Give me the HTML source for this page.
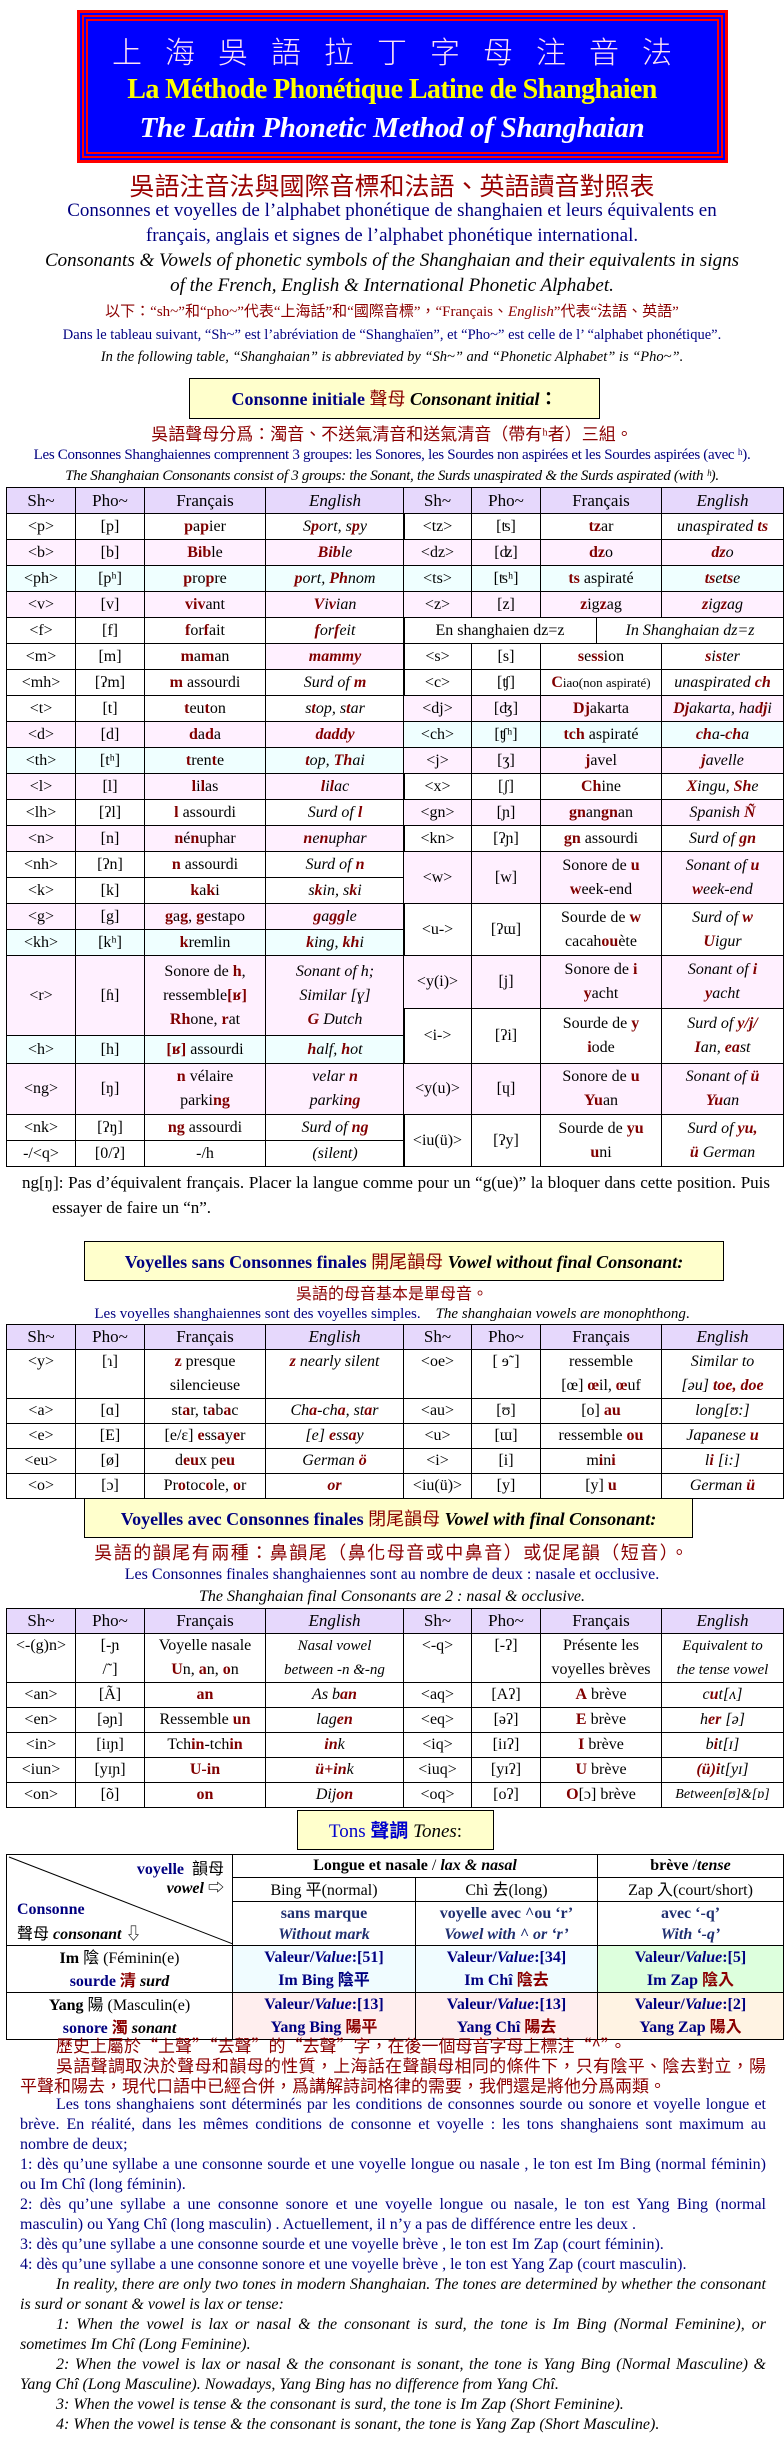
<!DOCTYPE html>
<html><head><meta charset="utf-8">
<style>
*{margin:0;padding:0;box-sizing:border-box}
body{width:784px;height:2445px;position:relative;background:#fff;font-family:"Liberation Serif","Noto Sans CJK TC",serif;color:#000;overflow:hidden}
.a{position:absolute;left:0;width:784px;text-align:center;white-space:nowrap}
.cj{font-family:"Noto Sans CJK TC","Liberation Serif",sans-serif}
.nv{color:#000080}
.dr{color:#8b0000}
.r{color:#800000;font-weight:bold}
.ri{color:#800000;font-weight:bold;font-style:italic}
.i{font-style:italic}
.box{position:absolute;background:#ffffcc;border:1px solid #000;text-align:center;font-weight:bold;white-space:nowrap}
table{position:absolute;border-collapse:collapse;table-layout:fixed;font-size:16px}
td{border:1px solid #000;text-align:center;padding:0 1px;line-height:24px;white-space:nowrap;overflow:hidden}
tr.h td{background:#e6d8fc;font-size:17px}
.p{background:#fff0ff}
.c{background:#efffff}
td.e{font-style:italic}
.para{position:absolute;left:20px;width:746px;text-align:justify;font-size:16px;line-height:20px}
.para p{text-indent:36px}
.ni{text-indent:0!important}
</style></head><body>

<div style="position:absolute;left:77px;top:10px;width:651px;height:153px;background:#0000ff;border:3px solid #ff0000;box-shadow:inset 0 0 0 2px #0000ff,inset 0 0 0 4px #ff0000,inset 0 0 0 6px #0000ff,inset 0 0 0 8px #ff0000"></div>
<div class="a cj" style="top:30px;font-size:30px;line-height:40px;color:#ffe4f4;letter-spacing:23px;text-indent:23px;font-weight:300">上海吳語拉丁字母注音法</div>
<div class="a" style="top:72px;font-size:28px;line-height:36px;color:#ffff00;font-weight:bold;letter-spacing:-0.6px">La Méthode Phonétique Latine de Shanghaien</div>
<div class="a" style="top:110px;font-size:29px;line-height:36px;color:#fff;font-weight:bold;font-style:italic;letter-spacing:-0.3px">The Latin Phonetic Method of Shanghaian</div>

<div class="a cj" style="top:170px;font-size:25px;line-height:30px;color:#990000">吳語注音法與國際音標和法語、英語讀音對照表</div>
<div class="a nv" style="top:198px;font-size:19px;line-height:25px">Consonnes et voyelles de l’alphabet phonétique de shanghaien et leurs équivalents en</div>
<div class="a nv" style="top:223px;font-size:19px;line-height:25px">français, anglais et signes de l’alphabet phonétique international.</div>
<div class="a i" style="top:248px;font-size:19px;line-height:25px">Consonants &amp; Vowels of phonetic symbols of the Shanghaian and their equivalents in signs</div>
<div class="a i" style="top:273px;font-size:19px;line-height:25px">of the French, English &amp; International Phonetic Alphabet.</div>
<div class="a dr" style="top:302px;font-size:15px;line-height:20px">以下：“sh~”和“pho~”代表“上海話”和“國際音標”，“Français、<i>English</i>”代表“法語、英語”</div>
<div class="a nv" style="top:326px;font-size:14.5px;line-height:18px">Dans le tableau suivant, “Sh~” est l’abréviation de “Shanghaïen”, et “Pho~” est celle de l’ “alphabet phonétique”.</div>
<div class="a i" style="top:348px;font-size:14.5px;line-height:18px">In the following table, “Shanghaian” is abbreviated by “Sh~” and “Phonetic Alphabet” is “Pho~”.</div>

<div class="box" style="left:189px;top:378px;width:411px;height:41px;line-height:39px;font-size:18px"><span class="nv">Consonne initiale</span> <span class="dr cj" style="font-weight:normal">聲母</span> <i>Consonant initial</i>：</div>
<div class="a dr cj" style="top:422px;font-size:17px;line-height:22px">吳語聲母分爲：濁音、不送氣清音和送氣清音（帶有ʰ者）三組。</div>
<div class="a nv" style="top:446px;font-size:15px;line-height:19px;letter-spacing:-0.3px">Les Consonnes Shanghaiennes comprennent 3 groupes: les Sonores, les Sourdes non aspirées et les Sourdes aspirées (avec ʰ).</div>
<div class="a i" style="top:467px;font-size:15px;line-height:19px;letter-spacing:-0.3px">The Shanghaian Consonants consist of 3 groups: the Sonant, the Surds unaspirated &amp; the Surds aspirated (with ʰ).</div>

<!-- Table 1 left -->
<table style="left:6px;top:487px;width:398px">
<colgroup><col style="width:69px"><col style="width:69px"><col style="width:121px"><col style="width:139px"></colgroup>
<tr class="h" style="height:26px"><td>Sh~</td><td>Pho~</td><td>Français</td><td class="e">English</td></tr>
<tr style="height:26px"><td>&lt;p&gt;</td><td>[p]</td><td><span class="r">p</span>a<span class="r">p</span>ier</td><td class="e">S<span class="ri">p</span>ort, s<span class="ri">p</span>y</td></tr>
<tr class="p" style="height:26px"><td>&lt;b&gt;</td><td>[b]</td><td><span class="r">Bib</span>le</td><td class="e"><span class="ri">Bib</span>le</td></tr>
<tr class="c" style="height:26px"><td>&lt;ph&gt;</td><td>[pʰ]</td><td><span class="r">p</span>ro<span class="r">p</span>re</td><td class="e"><span class="ri">p</span>ort, <span class="ri">Ph</span>nom</td></tr>
<tr class="p" style="height:26px"><td>&lt;v&gt;</td><td>[v]</td><td><span class="r">viv</span>ant</td><td class="e"><span class="ri">V</span>i<span class="ri">v</span>ian</td></tr>
<tr style="height:26px"><td>&lt;f&gt;</td><td>[f]</td><td><span class="r">f</span>or<span class="r">f</span>ait</td><td class="e"><span class="ri">f</span>or<span class="ri">f</span>eit</td></tr>
<tr style="height:26px"><td>&lt;m&gt;</td><td>[m]</td><td><span class="r">m</span>a<span class="r">m</span>an</td><td class="e p"><span class="ri">mammy</span></td></tr>
<tr style="height:26px"><td>&lt;mh&gt;</td><td>[ʔm]</td><td><span class="r">m</span> assourdi</td><td class="e">Surd of <span class="ri">m</span></td></tr>
<tr style="height:26px"><td>&lt;t&gt;</td><td>[t]</td><td><span class="r">t</span>eu<span class="r">t</span>on</td><td class="e">s<span class="ri">t</span>op, s<span class="ri">t</span>ar</td></tr>
<tr class="p" style="height:26px"><td>&lt;d&gt;</td><td>[d]</td><td><span class="r">d</span>a<span class="r">d</span>a</td><td class="e"><span class="ri">daddy</span></td></tr>
<tr class="c" style="height:26px"><td>&lt;th&gt;</td><td>[tʰ]</td><td><span class="r">t</span>ren<span class="r">t</span>e</td><td class="e"><span class="ri">t</span>op, <span class="ri">Th</span>ai</td></tr>
<tr class="p" style="height:26px"><td>&lt;l&gt;</td><td>[l]</td><td><span class="r">l</span>i<span class="r">l</span>as</td><td class="e"><span class="ri">l</span>i<span class="ri">l</span>ac</td></tr>
<tr style="height:26px"><td>&lt;lh&gt;</td><td>[ʔl]</td><td><span class="r">l</span> assourdi</td><td class="e">Surd of <span class="ri">l</span></td></tr>
<tr class="p" style="height:26px"><td>&lt;n&gt;</td><td>[n]</td><td><span class="r">n</span>é<span class="r">n</span>uphar</td><td class="e"><span class="ri">n</span>e<span class="ri">n</span>uphar</td></tr>
<tr style="height:26px"><td>&lt;nh&gt;</td><td>[ʔn]</td><td><span class="r">n</span> assourdi</td><td class="e">Surd of <span class="ri">n</span></td></tr>
<tr style="height:26px"><td>&lt;k&gt;</td><td>[k]</td><td><span class="r">k</span>a<span class="r">k</span>i</td><td class="e">s<span class="ri">k</span>in, s<span class="ri">k</span>i</td></tr>
<tr class="p" style="height:26px"><td>&lt;g&gt;</td><td>[g]</td><td><span class="r">g</span>a<span class="r">g</span>, <span class="r">g</span>estapo</td><td class="e"><span class="ri">g</span>a<span class="ri">gg</span>le</td></tr>
<tr class="c" style="height:26px"><td>&lt;kh&gt;</td><td>[kʰ]</td><td><span class="r">k</span>remlin</td><td class="e"><span class="ri">k</span>ing, <span class="ri">kh</span>i</td></tr>
<tr class="p" style="height:80px"><td>&lt;r&gt;</td><td>[ɦ]</td><td>Sonore de <span class="r">h</span>,<br>ressemble<span class="r">[ʁ]</span><br><span class="r">Rh</span>one, <span class="r">r</span>at</td><td class="e">Sonant of h;<br>Similar [ɣ]<br><span class="ri">G</span> Dutch</td></tr>
<tr class="c" style="height:28px"><td>&lt;h&gt;</td><td>[h]</td><td><span class="r">[ʁ]</span> assourdi</td><td class="e"><span class="ri">h</span>alf, <span class="ri">h</span>ot</td></tr>
<tr class="p" style="height:51px"><td>&lt;ng&gt;</td><td>[ŋ]</td><td><span class="r">n</span> vélaire<br>parki<span class="r">ng</span></td><td class="e">velar <span class="ri">n</span><br>parki<span class="ri">ng</span></td></tr>
<tr style="height:26px"><td>&lt;nk&gt;</td><td>[ʔŋ]</td><td><span class="r">ng</span> assourdi</td><td class="e">Surd of <span class="ri">ng</span></td></tr>
<tr style="height:26px"><td>-/&lt;q&gt;</td><td>[0/ʔ]</td><td>-/h</td><td class="e">(silent)</td></tr>
</table>

<!-- Table 1 right -->
<table style="left:403px;top:487px;width:380px">
<colgroup><col style="width:68px"><col style="width:69px"><col style="width:121px"><col style="width:122px"></colgroup>
<tr class="h" style="height:26px"><td>Sh~</td><td>Pho~</td><td>Français</td><td class="e">English</td></tr>
<tr style="height:26px"><td>&lt;tz&gt;</td><td>[ʦ]</td><td><span class="r">tz</span>ar</td><td class="e">unaspirated <span class="ri">ts</span></td></tr>
<tr class="p" style="height:26px"><td>&lt;dz&gt;</td><td>[ʣ]</td><td><span class="r">dz</span>o</td><td class="e"><span class="ri">dz</span>o</td></tr>
<tr class="c" style="height:26px"><td>&lt;ts&gt;</td><td>[ʦʰ]</td><td><span class="r">ts</span> aspiraté</td><td class="e"><span class="ri">ts</span>e<span class="ri">ts</span>e</td></tr>
<tr class="p" style="height:26px"><td>&lt;z&gt;</td><td>[z]</td><td><span class="r">z</span>ig<span class="r">z</span>ag</td><td class="e"><span class="ri">z</span>ig<span class="ri">z</span>ag</td></tr>
<tr style="height:26px"><td colspan="4" style="padding:0"><div style="display:flex;height:25px;line-height:25px"><div style="width:193px;border-right:1px solid #000">En shanghaien dz=z</div><div style="flex:1" class="i">In Shanghaian dz=z</div></div></td></tr>
<tr style="height:26px"><td>&lt;s&gt;</td><td>[s]</td><td><span class="r">s</span>e<span class="r">ss</span>ion</td><td class="e"><span class="ri">s</span>i<span class="ri">s</span>ter</td></tr>
<tr style="height:26px"><td>&lt;c&gt;</td><td>[ʧ]</td><td style="font-size:13px"><span class="r" style="font-size:16px">C</span>iao(non aspiraté)</td><td class="e">unaspirated <span class="ri">ch</span></td></tr>
<tr class="p" style="height:26px"><td>&lt;dj&gt;</td><td>[ʤ]</td><td><span class="r">Dj</span>akarta</td><td class="e"><span class="ri">Dj</span>akarta, ha<span class="ri">dj</span>i</td></tr>
<tr class="c" style="height:26px"><td>&lt;ch&gt;</td><td>[ʧʰ]</td><td><span class="r">tch</span> aspiraté</td><td class="e"><span class="ri">ch</span>a-<span class="ri">ch</span>a</td></tr>
<tr class="p" style="height:26px"><td>&lt;j&gt;</td><td>[ʒ]</td><td><span class="r">j</span>avel</td><td class="e"><span class="ri">j</span>avelle</td></tr>
<tr style="height:26px"><td>&lt;x&gt;</td><td>[ʃ]</td><td><span class="r">Ch</span>ine</td><td class="e"><span class="ri">X</span>ingu, <span class="ri">Sh</span>e</td></tr>
<tr class="p" style="height:26px"><td>&lt;gn&gt;</td><td>[ɲ]</td><td><span class="r">gn</span>an<span class="r">gn</span>an</td><td class="e">Spanish <span class="ri">Ñ</span></td></tr>
<tr style="height:26px"><td>&lt;kn&gt;</td><td>[ʔɲ]</td><td><span class="r">gn</span> assourdi</td><td class="e">Surd of <span class="ri">gn</span></td></tr>
<tr class="p" style="height:52px"><td>&lt;w&gt;</td><td>[w]</td><td>Sonore de <span class="r">u</span><br><span class="r">w</span>eek-end</td><td class="e">Sonant of <span class="ri">u</span><br><span class="ri">w</span>eek-end</td></tr>
<tr style="height:52px"><td>&lt;u-&gt;</td><td>[ʔɯ]</td><td>Sourde de <span class="r">w</span><br>cacah<span class="r">ou</span>ète</td><td class="e">Surd of <span class="ri">w</span><br><span class="ri">U</span>igur</td></tr>
<tr class="p" style="height:53px"><td>&lt;y(i)&gt;</td><td>[j]</td><td>Sonore de <span class="r">i</span><br><span class="r">y</span>acht</td><td class="e">Sonant of <span class="ri">i</span><br><span class="ri">y</span>acht</td></tr>
<tr style="height:55px"><td>&lt;i-&gt;</td><td>[ʔi]</td><td>Sourde de <span class="r">y</span><br><span class="r">i</span>ode</td><td class="e">Surd of <span class="ri">y/j/</span><br><span class="ri">I</span>an, <span class="ri">ea</span>st</td></tr>
<tr class="p" style="height:51px"><td>&lt;y(u)&gt;</td><td>[ɥ]</td><td>Sonore de <span class="r">u</span><br><span class="r">Yu</span>an</td><td class="e">Sonant of <span class="ri">ü</span><br><span class="ri">Yu</span>an</td></tr>
<tr style="height:52px"><td>&lt;iu(ü)&gt;</td><td>[ʔy]</td><td>Sourde de <span class="r">yu</span><br><span class="r">u</span>ni</td><td class="e">Surd of <span class="ri">yu,</span><br><span class="ri">ü</span> German</td></tr>
</table>

<div class="para" style="top:1170px;left:22px;width:748px;font-size:17px;line-height:25px;padding-left:30px;text-indent:-30px">ng[ŋ]: Pas d’équivalent français. Placer la langue comme pour un “g(ue)” la bloquer dans cette position. Puis essayer de faire un “n”.</div>

<div class="box" style="left:84px;top:1241px;width:640px;height:40px;line-height:38px;font-size:18px"><span class="nv">Voyelles sans Consonnes finales</span> <span class="dr cj" style="font-weight:normal">開尾韻母</span> <i>Vowel without final Consonant:</i></div>
<div class="a dr cj" style="top:1282px;font-size:16px;line-height:21px">吳語的母音基本是單母音。</div>
<div class="a" style="top:1305px;font-size:15px;line-height:19px"><span class="nv">Les voyelles shanghaiennes sont des voyelles simples.</span> &nbsp;&nbsp; <i>The shanghaian vowels are monophthong</i>.</div>

<table style="left:6px;top:1324px;width:777px">
<colgroup><col style="width:69px"><col style="width:69px"><col style="width:121px"><col style="width:138px"><col style="width:68px"><col style="width:69px"><col style="width:121px"><col style="width:122px"></colgroup>
<tr class="h" style="height:24px"><td>Sh~</td><td>Pho~</td><td>Français</td><td class="e">English</td><td>Sh~</td><td>Pho~</td><td>Français</td><td class="e">English</td></tr>
<tr style="height:49px"><td style="vertical-align:top">&lt;y&gt;</td><td style="vertical-align:top">[ɿ]</td><td><span class="r">z</span> presque<br>silencieuse</td><td class="e" style="vertical-align:top"><span class="ri">z</span> nearly silent</td><td style="vertical-align:top">&lt;oe&gt;</td><td style="vertical-align:top">[ ɘ˜]</td><td>ressemble<br>[œ] <span class="r">œ</span>il, <span class="r">œ</span>uf</td><td class="e">Similar to<br>[əu] <span class="ri">toe, doe</span></td></tr>
<tr style="height:24px"><td>&lt;a&gt;</td><td>[ɑ]</td><td>st<span class="r">a</span>r, t<span class="r">a</span>b<span class="r">a</span>c</td><td class="e">Ch<span class="ri">a</span>-ch<span class="ri">a</span>, st<span class="ri">a</span>r</td><td>&lt;au&gt;</td><td>[ʊ]</td><td>[o] <span class="r">au</span></td><td class="e">long[ʊ:]</td></tr>
<tr style="height:24px"><td>&lt;e&gt;</td><td>[E]</td><td>[e/ɛ] <span class="r">e</span>ss<span class="r">a</span>y<span class="r">e</span>r</td><td class="e">[e] <span class="ri">e</span>ss<span class="ri">a</span>y</td><td>&lt;u&gt;</td><td>[ɯ]</td><td>ressemble <span class="r">ou</span></td><td class="e">Japanese <span class="ri">u</span></td></tr>
<tr style="height:24px"><td>&lt;eu&gt;</td><td>[ø]</td><td>d<span class="r">eu</span>x p<span class="r">eu</span></td><td class="e">German <span class="ri">ö</span></td><td>&lt;i&gt;</td><td>[i]</td><td>m<span class="r">i</span>n<span class="r">i</span></td><td class="e">l<span class="ri">i</span> [i:]</td></tr>
<tr style="height:24px"><td>&lt;o&gt;</td><td>[ɔ]</td><td>Pr<span class="r">o</span>toc<span class="r">o</span>le, <span class="r">o</span>r</td><td class="e"><span class="ri">or</span></td><td>&lt;iu(ü)&gt;</td><td>[y]</td><td>[y] <span class="r">u</span></td><td class="e">German <span class="ri">ü</span></td></tr>
</table>

<div class="box" style="left:84px;top:1498px;width:609px;height:40px;line-height:38px;font-size:18px"><span class="nv">Voyelles avec Consonnes finales</span> <span class="dr cj" style="font-weight:normal">閉尾韻母</span> <i>Vowel with final Consonant:</i></div>
<div class="a dr cj" style="top:1540px;font-size:18px;line-height:24px;letter-spacing:1.5px">吳語的韻尾有兩種：鼻韻尾（鼻化母音或中鼻音）或促尾韻（短音）。</div>
<div class="a nv" style="top:1565px;font-size:16px;line-height:20px">Les Consonnes finales shanghaiennes sont au nombre de deux : nasale et occlusive.</div>
<div class="a i" style="top:1587px;font-size:16px;line-height:20px">The Shanghaian final Consonants are 2 : nasal &amp; occlusive.</div>

<table style="left:6px;top:1608px;width:777px">
<colgroup><col style="width:69px"><col style="width:69px"><col style="width:121px"><col style="width:138px"><col style="width:68px"><col style="width:69px"><col style="width:121px"><col style="width:122px"></colgroup>
<tr class="h" style="height:25px"><td>Sh~</td><td>Pho~</td><td>Français</td><td class="e">English</td><td>Sh~</td><td>Pho~</td><td>Français</td><td class="e">English</td></tr>
<tr style="height:47px"><td style="vertical-align:top">&lt;-(g)n&gt;</td><td>[-ɲ<br>/˜]</td><td>Voyelle nasale<br><span class="r">U</span>n, <span class="r">a</span>n, <span class="r">o</span>n</td><td class="e" style="font-size:15px">Nasal vowel<br>between -n &amp;-ng</td><td style="vertical-align:top">&lt;-q&gt;</td><td style="vertical-align:top">[-ʔ]</td><td>Présente les<br>voyelles brèves</td><td class="e" style="font-size:15px">Equivalent to<br>the tense vowel</td></tr>
<tr style="height:24px"><td>&lt;an&gt;</td><td>[Ã]</td><td><span class="r">an</span></td><td class="e">As b<span class="ri">an</span></td><td>&lt;aq&gt;</td><td>[Aʔ]</td><td><span class="r">A</span> brève</td><td class="e">c<span class="ri">u</span>t[ʌ]</td></tr>
<tr style="height:24px"><td>&lt;en&gt;</td><td>[əɲ]</td><td>Ressemble <span class="r">un</span></td><td class="e">lag<span class="ri">en</span></td><td>&lt;eq&gt;</td><td>[əʔ]</td><td><span class="r">E</span> brève</td><td class="e">h<span class="ri">er</span> [ə]</td></tr>
<tr style="height:25px"><td>&lt;in&gt;</td><td>[iɪɲ]</td><td>Tch<span class="r">in</span>-tch<span class="r">in</span></td><td class="e"><span class="ri">in</span>k</td><td>&lt;iq&gt;</td><td>[iɪʔ]</td><td><span class="r">I</span> brève</td><td class="e">b<span class="ri">i</span>t[ɪ]</td></tr>
<tr style="height:24px"><td>&lt;iun&gt;</td><td>[yɪɲ]</td><td><span class="r">U-in</span></td><td class="e"><span class="ri">ü+in</span>k</td><td>&lt;iuq&gt;</td><td>[yɪʔ]</td><td><span class="r">U</span> brève</td><td class="e"><span class="ri">(ü)i</span>t[yɪ]</td></tr>
<tr style="height:24px"><td>&lt;on&gt;</td><td>[õ]</td><td><span class="r">on</span></td><td class="e">Dij<span class="ri">on</span></td><td>&lt;oq&gt;</td><td>[oʔ]</td><td><span class="r">O</span>[ɔ] brève</td><td class="e" style="font-size:14px">Between[ʊ]&amp;[ɒ]</td></tr>
</table>

<div class="box" style="left:297px;top:1810px;width:197px;height:40px;line-height:38px;font-size:19px;font-weight:normal"><span style="color:#0000cc">Tons <span class="cj" style="font-weight:bold">聲調</span></span> <i>Tones</i>:</div>

<table style="left:6px;top:1854px;width:777px;font-size:16px">
<colgroup><col style="width:226px"><col style="width:183px"><col style="width:182px"><col style="width:186px"></colgroup>
<tr style="height:23px"><td rowspan="3" style="position:relative;padding:0;vertical-align:top">
<svg width="226" height="89" style="position:absolute;left:0;top:0"><line x1="2" y1="2" x2="226" y2="89" stroke="#000" stroke-width="1"/></svg>
<div style="position:absolute;right:8px;top:0;line-height:24px"><b class="nv">voyelle</b>&nbsp; <span class="cj">韻母</span></div>
<div style="position:absolute;right:8px;top:23px;line-height:22px"><b><i>vowel</i></b> ⇨</div>
<div style="position:absolute;left:10px;top:44px;line-height:22px;text-align:left"><b class="nv">Consonne</b><br><span class="cj">聲母</span> <b><i>consonant</i></b> ⇩</div>
</td><td colspan="2" style="line-height:22px"><b>Longue et nasale</b> / <b><i>lax &amp; nasal</i></b></td><td style="line-height:22px"><b>brève</b> /<b><i>tense</i></b></td></tr>
<tr style="height:22px"><td style="line-height:21px">Bing <span class="cj">平</span>(normal)</td><td style="line-height:21px">Chì <span class="cj">去</span>(long)</td><td style="line-height:21px">Zap <span class="cj">入</span>(court/short)</td></tr>
<tr style="height:44px"><td style="line-height:21px;color:#203070"><b>sans marque</b><br><b><i>Without mark</i></b></td><td style="line-height:21px;color:#203070"><b>voyelle avec ^ou ‘r’</b><br><b><i>Vowel with ^ or ‘r’</i></b></td><td style="line-height:21px;color:#203070"><b>avec ‘-q’</b><br><b><i>With ‘-q’</i></b></td></tr>
<tr style="height:44px"><td style="line-height:21px"><b>Im</b> <span class="cj">陰</span> (Féminin(e)<br><b class="nv">sourde</b> <span class="dr cj" style="font-weight:bold">清</span> <b><i>surd</i></b></td>
<td class="nv" style="background:#f0fcff;line-height:21px;font-weight:bold">Valeur/<i>Value</i>:[51]<br>Im Bing <span class="cj">陰平</span></td>
<td class="nv" style="background:#f0fcff;line-height:21px;font-weight:bold">Valeur/<i>Value</i>:[34]<br>Im Chî <span class="cj dr">陰去</span></td>
<td class="nv" style="background:#ddffdd;line-height:21px;font-weight:bold">Valeur/<i>Value</i>:[5]<br>Im Zap <span class="cj dr">陰入</span></td></tr>
<tr style="height:44px"><td style="line-height:21px"><b>Yang</b> <span class="cj">陽</span> (Masculin(e)<br><b class="nv">sonore</b> <span class="dr cj" style="font-weight:bold">濁</span> <b><i>sonant</i></b></td>
<td class="nv" style="background:#ffeeee;line-height:21px;font-weight:bold">Valeur/<i>Value</i>:[13]<br>Yang Bing <span class="cj dr">陽平</span></td>
<td class="nv" style="background:#ffeeee;line-height:21px;font-weight:bold">Valeur/<i>Value</i>:[13]<br>Yang Chî <span class="cj dr">陽去</span></td>
<td class="nv" style="background:#fff3e3;line-height:21px;font-weight:bold">Valeur/<i>Value</i>:[2]<br>Yang Zap <span class="cj dr">陽入</span></td></tr>
</table>

<div class="para" style="top:2035px">
<p class="dr cj" style="font-size:17px">歷史上屬於“上聲”“去聲”的“去聲”字，在後一個母音字母上標注“^”。</p>
<p class="dr cj" style="font-size:17px">吳語聲調取決於聲母和韻母的性質，上海話在聲韻母相同的條件下，只有陰平、陰去對立，陽平聲和陽去，現代口語中已經合併，爲講解詩詞格律的需要，我們還是將他分爲兩類。</p>
<p class="nv">Les tons shanghaiens sont déterminés par les conditions de consonnes sourde ou sonore et voyelle longue et brève. En réalité, dans les mêmes conditions de consonne et voyelle : les tons shanghaiens sont maximum au nombre de deux;</p>
<p class="nv ni">1: dès qu’une syllabe a une consonne sourde et une voyelle longue ou nasale , le ton est Im Bing (normal féminin) ou Im Chî (long féminin).</p>
<p class="nv ni">2: dès qu’une syllabe a une consonne sonore et une voyelle longue ou nasale, le ton est Yang Bing (normal masculin) ou Yang Chî (long masculin) . Actuellement, il n’y a pas de différence entre les deux .</p>
<p class="nv ni">3: dès qu’une syllabe a une consonne sourde et une voyelle brève , le ton est Im Zap (court féminin).</p>
<p class="nv ni">4: dès qu’une syllabe a une consonne sonore et une voyelle brève , le ton est Yang Zap (court masculin).</p>
<p class="i">In reality, there are only two tones in modern Shanghaian. The tones are determined by whether the consonant is surd or sonant &amp; vowel is lax or tense:</p>
<p class="i">1: When the vowel is lax or nasal &amp; the consonant is surd, the tone is Im Bing (Normal Feminine), or sometimes Im Chî (Long Feminine).</p>
<p class="i">2: When the vowel is lax or nasal &amp; the consonant is sonant, the tone is Yang Bing (Normal Masculine) &amp; Yang Chî (Long Masculine). Nowadays, Yang Bing has no difference from Yang Chî.</p>
<p class="i">3: When the vowel is tense &amp; the consonant is surd, the tone is Im Zap (Short Feminine).</p>
<p class="i">4: When the vowel is tense &amp; the consonant is sonant, the tone is Yang Zap (Short Masculine).</p>
</div>
</body></html>
